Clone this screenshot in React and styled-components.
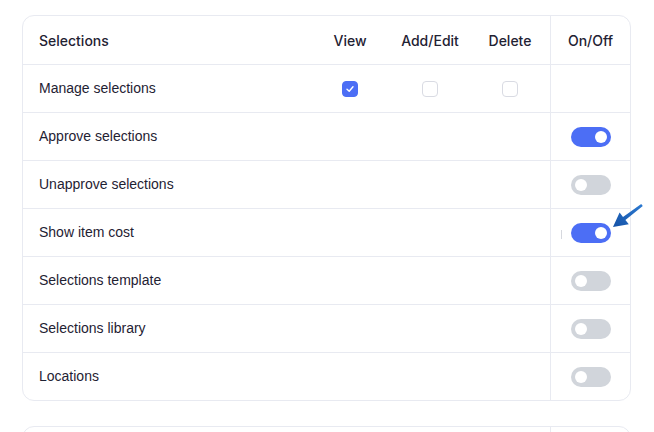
import React from 'react'
import styled, { createGlobalStyle } from 'styled-components'

const GlobalStyle = createGlobalStyle`
  html, body { margin: 0; background: #fff; }
  body { font-family: "Liberation Sans", Arial, sans-serif; color: #1f2233; }
`

const rows = [
  { name: 'Manage selections', view: true, add: false, del: false },
  { name: 'Approve selections', on: true },
  { name: 'Unapprove selections', on: false },
  { name: 'Show item cost', on: true, pointer: true },
  { name: 'Selections template', on: false },
  { name: 'Selections library', on: false },
  { name: 'Locations', on: false },
]

const Permissions = () => {
  return (
    <Page>
      <Card>
        <HeadRow>
          <HeadCell>Selections</HeadCell>
          <HeadCell $center>View</HeadCell>
          <HeadCell $center>Add/Edit</HeadCell>
          <HeadCell $center>Delete</HeadCell>
          <HeadCell $center $divider>On/Off</HeadCell>
        </HeadRow>
        {rows.map((row, i) => (
          <Row key={row.name} $last={i === rows.length - 1}>
            <Label>{row.name}</Label>
            <Cell>{row.view !== undefined && <Checkbox $checked={row.view}>{row.view && <Tick />}</Checkbox>}</Cell>
            <Cell>{row.add !== undefined && <Checkbox $checked={row.add} />}</Cell>
            <Cell>{row.del !== undefined && <Checkbox $checked={row.del} />}</Cell>
            <Cell $divider>
              {row.on !== undefined && (
                <Switch $on={row.on}>
                  <Knob $on={row.on} />
                </Switch>
              )}
              {row.pointer && (
                <>
                  <Ghost />
                  <Pointer />
                </>
              )}
            </Cell>
          </Row>
        ))}
      </Card>
      <Card>
        <HeadRow>
          <HeadCell />
          <HeadCell />
          <HeadCell />
          <HeadCell />
          <HeadCell $divider />
        </HeadRow>
      </Card>
    </Page>
  )
}

const Tick = () => (
  <svg width="10" height="10" viewBox="0 0 10 10" fill="none">
    <path d="M2 5.2 L4.2 7.2 L8 2.8" stroke="#fff" strokeWidth="1.4" strokeLinecap="round" strokeLinejoin="round" />
  </svg>
)

// annotation arrow pointing at the cost toggle
const Pointer = () => (
  <Arrow width="34" height="30" viewBox="0 0 34 30">
    <defs>
      <linearGradient id="arrowFill" x1="1" y1="0" x2="0" y2="1">
        <stop offset="0" stopColor="#2c7ad2" />
        <stop offset="1" stopColor="#1552a6" />
      </linearGradient>
    </defs>
    <path d="M1 23 L7.6 8.6 L11 12.9 L29.2 0 L30.8 2 L13.4 15.9 L16.8 20.3 Z" fill="url(#arrowFill)" />
  </Arrow>
)

const Page = styled.div`
  padding: 15px 23px 0 22px;
  display: flex;
  flex-direction: column;
  gap: 25px;
  height: 432px;
  box-sizing: border-box;
  overflow: hidden;
`

const Card = styled.div`
  border: 1px solid #e8eaf1;
  border-radius: 12px;
  background: #fff;
  flex-shrink: 0;
`

const grid = `
  display: grid;
  grid-template-columns: 1fr 80px 80px 80px 80px;
`

const HeadRow = styled.div`
  ${grid}
  height: 48px;
  border-bottom: 1px solid #e8eaf1;
`

const HeadCell = styled.div`
  display: flex;
  align-items: center;
  justify-content: ${p => (p.$center ? 'center' : 'flex-start')};
  padding-left: ${p => (p.$center ? '0' : '16px')};
  font-family: Inter, "Noto Sans", sans-serif;
  font-weight: 500;
  font-size: 14px;
  color: #1f2233;
  border-left: ${p => (p.$divider ? '1px solid #e8eaf1' : 'none')};
`

const Row = styled.div`
  ${grid}
  height: 47px;
  border-bottom: ${p => (p.$last ? 'none' : '1px solid #e8eaf1')};
`

const Label = styled.div`
  display: flex;
  align-items: center;
  padding-left: 16px;
  padding-bottom: 2px;
  font-size: 14px;
  color: #1f2233;
`

const Cell = styled.div`
  position: relative;
  display: flex;
  align-items: center;
  justify-content: center;
  border-left: ${p => (p.$divider ? '1px solid #e8eaf1' : 'none')};
`

const Checkbox = styled.span`
  width: 14px;
  height: 14px;
  border-radius: 4px;
  display: flex;
  align-items: center;
  justify-content: center;
  background: ${p => (p.$checked ? '#4c6ef5' : '#fff')};
  border: 1px solid ${p => (p.$checked ? '#4c6ef5' : '#d9dbe3')};
`

const Switch = styled.span`
  width: 40px;
  height: 20px;
  border-radius: 10px;
  background: ${p => (p.$on ? '#4c6ef5' : '#d1d5db')};
  display: flex;
  align-items: center;
  padding: 0 4px;
  box-sizing: border-box;
  justify-content: ${p => (p.$on ? 'flex-end' : 'flex-start')};
`

const Knob = styled.span`
  width: 12px;
  height: 12px;
  border-radius: 50%;
  background: #fff;
`

const Ghost = styled.span`
  position: absolute;
  left: 10px;
  top: 21px;
  width: 1px;
  height: 9px;
  background: #d6d8de;
`

const Arrow = styled.svg`
  position: absolute;
  left: 61px;
  top: -5px;
`

export default function App() {
  return (
    <>
      <GlobalStyle />
      <Permissions />
    </>
  )
}
